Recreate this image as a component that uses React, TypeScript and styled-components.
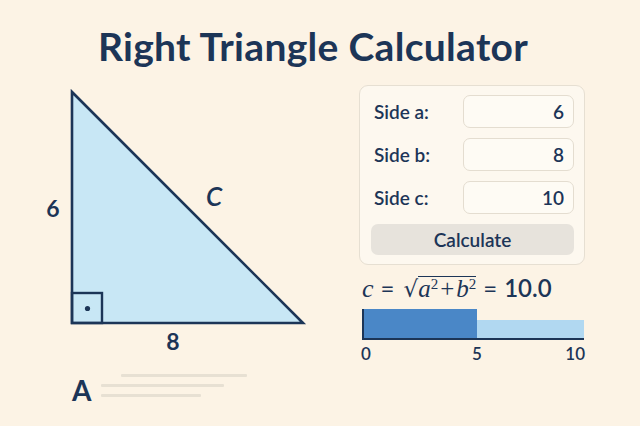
import React from "react";
import styled, { createGlobalStyle } from "styled-components";

const Global = createGlobalStyle`
  html, body { margin: 0; padding: 0; background: #fcf3e5; }
  body { font-family: Lato, "Noto Sans", sans-serif; color: #1c3557; }
`;

const NAVY = "#1c3557";

const Page = styled.div`
  width: 640px;
  height: 426px;
  background: #fcf3e5;
  display: flex;
  flex-direction: column;
  overflow: hidden;
`;

const Title = styled.h1`
  margin: 0;
  padding: 24px 14px 0 0;
  height: 56px;
  box-sizing: border-box;
  text-align: center;
  font-family: Lato, sans-serif;
  font-weight: 700;
  font-size: 39px;
  line-height: 44px;
  color: ${NAVY};
  letter-spacing: 0.3px;
`;

const Body = styled.div`
  display: flex;
  flex: 1;
`;

const LeftCol = styled.div`
  width: 359px;
  display: flex;
  flex-direction: column;
`;

const Figure = styled.svg`
  display: block;
  margin-left: 30px;
  margin-top: 24px;
`;

const Footer = styled.div`
  display: flex;
  align-items: center;
  gap: 10px;
  margin-left: 72px;
  margin-top: 16px;
`;

const Letter = styled.span`
  font-family: Lato, sans-serif;
  font-weight: 700;
  font-size: 28px;
  line-height: 28px;
  color: ${NAVY};
`;

const Lines = styled.div`
  display: flex;
  flex-direction: column;
  gap: 7px;
  margin-top: -10px;
`;

const Line = styled.div<{ $w: number; $off?: number }>`
  height: 3px;
  width: ${(p) => p.$w}px;
  margin-left: ${(p) => p.$off ?? 0}px;
  background: #e7e0d3;
  border-radius: 1px;
`;

const RightCol = styled.div`
  width: 226px;
  display: flex;
  flex-direction: column;
  padding-top: 29px;
`;

const Panel = styled.div`
  box-sizing: border-box;
  width: 226px;
  border: 1px solid #e6dfd2;
  border-radius: 9px;
  background: #fdf8ef;
  padding: 9px 10px 9px 11px;
  display: flex;
  flex-direction: column;
  gap: 10px;
`;

const Row = styled.div`
  display: flex;
  align-items: center;
  justify-content: space-between;
`;

const Label = styled.label`
  padding-left: 3px;
  font-family: Lato, sans-serif;
  font-weight: 600;
  font-size: 19px;
  color: ${NAVY};
`;

const Input = styled.input`
  box-sizing: border-box;
  width: 111px;
  height: 33px;
  border: 1.5px solid #e4ddd0;
  border-radius: 7px;
  background: #fefbf4;
  text-align: right;
  padding: 0 9px 0 0;
  font-family: Lato, sans-serif;
  font-weight: 600;
  font-size: 19px;
  color: ${NAVY};
  outline: none;
`;

const Button = styled.button`
  height: 31px;
  width: 203px;
  border: none;
  border-radius: 7px;
  background: #e7e3dc;
  font-family: Lato, sans-serif;
  font-weight: 600;
  font-size: 19px;
  color: ${NAVY};
  cursor: pointer;
`;

const Formula = styled.div`
  margin-top: 10px;
  margin-left: 3px;
  display: flex;
  align-items: baseline;
  font-size: 22px;
  line-height: 26px;
  color: ${NAVY};
  white-space: nowrap;
`;

const MathVar = styled.span`
  font-family: "Liberation Serif", "DejaVu Serif", serif;
  font-style: italic;
  font-size: 26px;
`;

const Op = styled.span`
  font-family: Lato, sans-serif;
  font-size: 24px;
  margin: 0 7px;
`;

const Radical = styled.span`
  font-family: "DejaVu Sans", sans-serif;
  font-size: 23px;
  margin-left: 2px;
`;

const Radicand = styled.span`
  border-top: 1.5px solid ${NAVY};
  line-height: 22px;
  padding-top: 1px;
  font-family: "Liberation Serif", serif;
  font-style: italic;
  font-size: 25px;
  sup { font-size: 15px; font-style: normal; vertical-align: 8px; line-height: 0; }
`;

const Plain = styled.span`
  font-family: "Liberation Serif", serif;
  font-style: normal;
  margin: 0 2px;
`;

const Result = styled.span`
  font-family: Lato, sans-serif;
  font-weight: 600;
  font-size: 24px;
`;

const Bar = styled.div`
  margin-top: 8px;
  margin-left: 3px;
  width: 222px;
  height: 30px;
  display: flex;
  align-items: flex-end;
  border-bottom: 2px solid ${NAVY};
  box-sizing: border-box;
`;

const Segment = styled.div<{ $h: number; $c: string; $edge?: boolean }>`
  height: ${(p) => p.$h}px;
  background: ${(p) => p.$c};
  border-left: ${(p) => (p.$edge ? `2px solid ${NAVY}` : "none")};
  box-sizing: border-box;
`;

const Ticks = styled.div`
  margin-left: 2px;
  width: 224px;
  display: flex;
  margin-top: 4px;
  font-family: Lato, sans-serif;
  font-weight: 600;
  font-size: 17px;
  line-height: 20px;
  color: ${NAVY};
`;

const Tick = styled.span<{ $align: string }>`
  flex: ${(p) => (p.$align === "center" ? "0 0 auto" : "1")};
  text-align: ${(p) => p.$align};
  padding-left: ${(p) => (p.$align === "center" ? "8px" : "0")};
`;

export default function App() {
  const a = 6;
  const b = 8;
  const c = Math.sqrt(a * a + b * b);
  const max = 10;
  const split = (5 / max) * 230;
  return (
    <>
      <Global />
      <Page>
        <Title>Right Triangle Calculator</Title>
        <Body>
          <LeftCol>
            <Figure width={300} height={280} viewBox="30 80 300 280">
              <polygon
                points="72,92 72,323 303,323"
                fill="#c8e7f5"
                stroke={NAVY}
                strokeWidth={2.6}
                strokeLinejoin="miter"
              />
              <rect x={72} y={293} width={30} height={30} fill="none" stroke={NAVY} strokeWidth={2.4} />
              <circle cx={87.5} cy={308.5} r={2.6} fill={NAVY} />
              <text x={53} y={217} textAnchor="middle" fontFamily="Lato, sans-serif" fontWeight={700} fontSize={23} fill={NAVY}>6</text>
              <text x={214} y={206} textAnchor="middle" fontFamily="Lato, sans-serif" fontStyle="italic" fontWeight={600} fontSize={26} fill={NAVY}>C</text>
              <text x={173} y={350} textAnchor="middle" fontFamily="Lato, sans-serif" fontWeight={700} fontSize={23} fill={NAVY}>8</text>
            </Figure>
            <Footer>
              <Letter>A</Letter>
              <Lines>
                <Line $w={126} $off={20} />
                <Line $w={123} />
                <Line $w={100} />
              </Lines>
            </Footer>
          </LeftCol>
          <RightCol>
            <Panel>
              <Row>
                <Label>Side a:</Label>
                <Input readOnly value={String(a)} />
              </Row>
              <Row>
                <Label>Side b:</Label>
                <Input readOnly value={String(b)} />
              </Row>
              <Row>
                <Label>Side c:</Label>
                <Input readOnly value={String(c)} />
              </Row>
              <Button>Calculate</Button>
            </Panel>
            <Formula>
              <MathVar>c</MathVar>
              <Op>=</Op>
              <Radical>√</Radical>
              <Radicand>
                a<sup>2</sup>
                <Plain>+</Plain>b<sup>2</sup>
              </Radicand>
              <Op>=</Op>
              <Result>{c.toFixed(1)}</Result>
            </Formula>
            <Bar>
              <Segment $h={29} $c="#4a87c7" $edge style={{ width: split }} />
              <Segment $h={18} $c="#b1d8f1" style={{ flex: 1 }} />
            </Bar>
            <Ticks>
              <Tick $align="left">0</Tick>
              <Tick $align="center">5</Tick>
              <Tick $align="right">10</Tick>
            </Ticks>
          </RightCol>
        </Body>
      </Page>
    </>
  );
}
